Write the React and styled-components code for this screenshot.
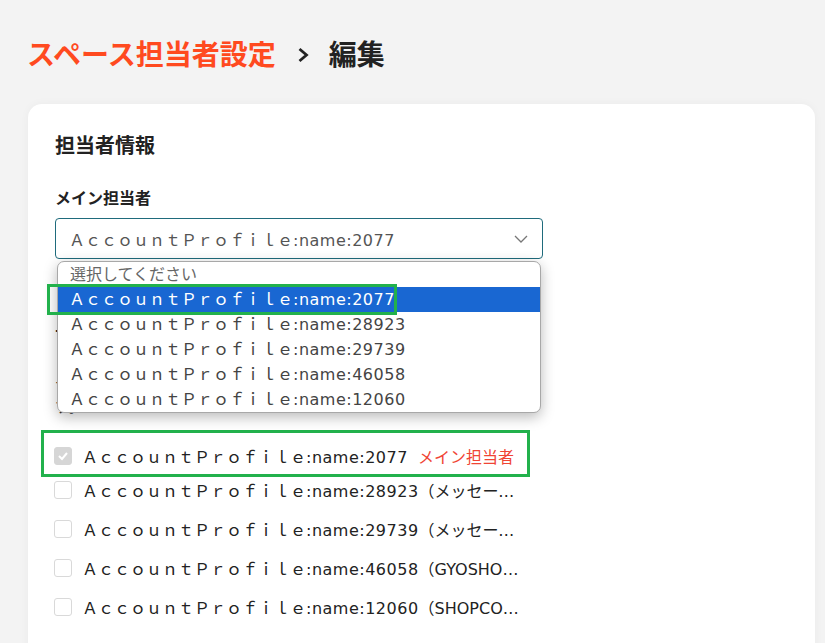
import React from 'react'
import styled, { createGlobalStyle } from 'styled-components'

const Global = createGlobalStyle`
  body {
    margin: 0;
    background: #f3f3f3;
    font-family: "DejaVu Sans", "Noto Sans CJK JP", sans-serif;
    color: #222;
  }
`

const Page = styled.div`
  padding: 33px 10px 0 28px;
  height: 643px;
  box-sizing: border-box;
  overflow: hidden;
`

const Crumbs = styled.h1`
  margin: 0 0 31px -1px;
  display: flex;
  align-items: center;
  height: 40px;
  font-size: 28px;
  font-weight: 700;
  font-family: "Noto Sans CJK JP", sans-serif;
  & .root { color: #ff4a1f; }
  & .current { color: #222; }
  & svg { margin: 4px 20px 0 21px; }
`

const Card = styled.div`
  background: #fff;
  border-radius: 14px;
  padding: 27px 27px;
  min-height: 700px;
  box-shadow: 0 0 10px rgba(0,0,0,0.04);
`

const SectionTitle = styled.h2`
  margin: 0;
  font-size: 20px;
  line-height: 30px;
  font-weight: 700;
`

const Label = styled.div`
  margin-top: ${p => p.$top}px;
  font-size: 16px;
  line-height: 24px;
  font-weight: 700;
`

const SelectWrap = styled.div`
  position: relative;
  margin-top: 7px;
  width: 488px;
`

const SelectBox = styled.div`
  height: 41px;
  box-sizing: border-box;
  border: 1px solid #1f6b7c;
  border-radius: 4px;
  display: flex;
  align-items: center;
  justify-content: space-between;
  padding: 0 14px 0 13px;
  font-size: 16px;
  color: #555;
`

const ListBox = styled.div`
  position: absolute;
  top: 43px;
  left: 2px;
  width: 484px;
  box-sizing: border-box;
  background: #fff;
  border: 1px solid #a8a8a8;
  border-radius: 7px;
  box-shadow: 0 4px 14px rgba(0,0,0,0.28);
  z-index: 5;
`

const Option = styled.div`
  position: relative;
  height: 25px;
  line-height: 25px;
  padding-left: ${p => (p.$placeholder ? 12 : 11)}px;
  font-size: 16px;
  color: ${p => (p.$selected ? '#fff' : p.$placeholder ? '#666' : '#444')};
  background: ${p => (p.$selected ? '#1967d2' : 'transparent')};
`

const Mark = styled.span`
  position: absolute;
  left: ${p => p.$left}px;
  top: ${p => p.$top}px;
  width: ${p => p.$w}px;
  height: ${p => p.$h}px;
  box-sizing: border-box;
  border: 3px solid #22b14c;
  pointer-events: none;
`

const Note = styled.p`
  margin: 26px 0 0;
  font-size: 15px;
  line-height: 23px;
  color: #333;
`

const Members = styled.div`
  margin-top: 22px;
  display: flex;
  flex-direction: column;
`

const Member = styled.label`
  position: relative;
  display: flex;
  align-items: center;
  height: ${p => (p.$main ? 29 : 39)}px;
  font-size: 16px;
  color: #222;
`

const Box = styled.span`
  width: 18px;
  height: 18px;
  box-sizing: border-box;
  flex: none;
  border-radius: 3px;
  border: 1px solid ${p => (p.$checked ? '#d6d6d6' : '#d9d9d9')};
  background: ${p => (p.$checked ? '#d6d6d6' : '#fff')};
  display: flex;
  align-items: center;
  justify-content: center;
  margin: 0 10px 0 -1px;
`

const Name = styled.span`
  max-width: 440px;
  white-space: nowrap;
  overflow: hidden;
  text-overflow: ellipsis;
`

const Id = styled.span`
  letter-spacing: 0.5px;
`

const MainTag = styled.span`
  color: #f04434;
  margin-left: 10px;
  white-space: nowrap;
`

const fw = 'ＡｃｃｏｕｎｔＰｒｏｆｉｌｅ'

const options = ['2077', '28923', '29739', '46058', '12060']

const members = [
  { id: '2077', main: true },
  { id: '28923', note: '（メッセージ担当）' },
  { id: '29739', note: '（メッセージ担当）' },
  { id: '46058', note: '（GYOSHO株式会社）' },
  { id: '12060', note: '（SHOPCOLLECTION）' },
]

const Profile = ({ id }) => (
  <>
    {fw}<Id>:name:{id}</Id>
  </>
)

const Chevron = () => (
  <svg width="14" height="8" viewBox="0 0 14 8">
    <polyline points="1,1 7,7 13,1" fill="none" stroke="#777" strokeWidth="1.3" />
  </svg>
)

const Crumb = () => (
  <svg width="12" height="16" viewBox="0 0 12 16">
    <polyline points="2.5,2 9.5,8 2.5,14" fill="none" stroke="#222" strokeWidth="2.8" />
  </svg>
)

const Check = () => (
  <svg width="12" height="10" viewBox="0 0 12 10">
    <polyline points="2,5 5,8 10,2" fill="none" stroke="#fff" strokeWidth="2" />
  </svg>
)

export default function App() {
  return (
    <Page>
      <Global />
      <Crumbs>
        <span className="root">スペース担当者設定</span>
        <Crumb />
        <span className="current">編集</span>
      </Crumbs>
      <Card>
        <SectionTitle>担当者情報</SectionTitle>
        <Label $top={26}>メイン担当者</Label>
        <SelectWrap>
          <SelectBox>
            <span><Profile id="2077" /></span>
            <Chevron />
          </SelectBox>
          <ListBox>
            <Option $placeholder>選択してください</Option>
            {options.map(o => (
              <Option key={o} $selected={o === '2077'}>
                <Profile id={o} />
                {o === '2077' && <Mark $left={-11} $top={-3} $w={350} $h={31} />}
              </Option>
            ))}
          </ListBox>
        </SelectWrap>
        <Label $top={64}>サブ担当者</Label>
        <Note>
          チャット通知を受け取るメンバーを選択できま<br />す。
        </Note>
        <Members>
          {members.map(m => (
            <Member key={m.id} $main={m.main}>
              <Box $checked={m.main}>{m.main && <Check />}</Box>
              <Name><Profile id={m.id} />{m.note}</Name>
              {m.main && <MainTag>メイン担当者</MainTag>}
              {m.main && <Mark $left={-14} $top={-11} $w={489} $h={47} />}
            </Member>
          ))}
        </Members>
      </Card>
    </Page>
  )
}
